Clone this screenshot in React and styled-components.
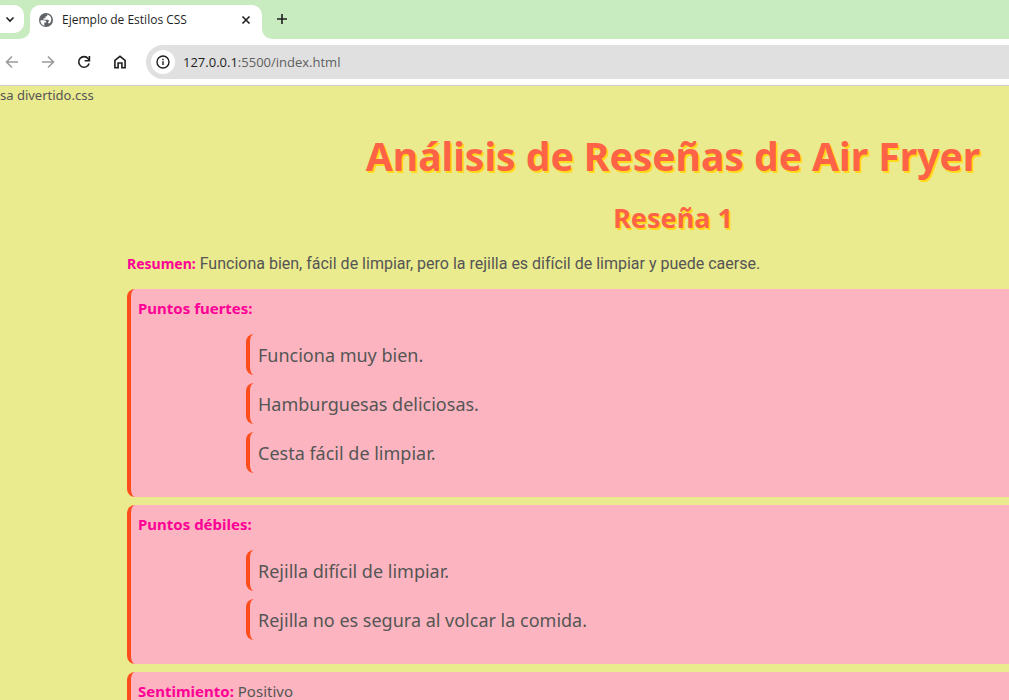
import styled, { createGlobalStyle } from "styled-components";

const tabStripColor = "#c9ebc0";
const pageColor = "#eaea8e";
const cardColor = "#fcb5c0";
const accentColor = "#ff4c1c";
const headingColor = "#ff6347";
const labelColor = "#ff0096";
const textColor = "#555555";

const GlobalStyle = createGlobalStyle`
  * {
    box-sizing: border-box;
  }

  body {
    margin: 0;
    background-color: ${pageColor};
  }

  #root {
    height: 100vh;
    overflow: hidden;
  }
`;

const StyledBrowser = styled.div`
  display: flex;
  flex-direction: column;
  font-family: "Open Sans", sans-serif;
`;

const StyledTabStrip = styled.div`
  display: flex;
  height: 39px;
  background-color: ${tabStripColor};
`;

const StyledIconButton = styled.button`
  display: flex;
  align-items: center;
  justify-content: center;
  flex: none;
  width: ${(props) => props.$size || 36}px;
  height: ${(props) => props.$size || 36}px;
  padding: 0;
  border: none;
  background: none;
  color: ${(props) => (props.disabled ? "#9b9b9b" : "#1f1f1f")};
`;

const StyledSearchCorner = styled.div`
  width: 30px;
  background-color: #ffffff;
`;

const StyledSearchArea = styled.div`
  height: 39px;
  padding: 5px 6px 6px 0;
  border-radius: 0 0 10px 0;
  background-color: ${tabStripColor};
`;

const StyledSearchButton = styled(StyledIconButton)`
  width: 24px;
  height: 28px;
  padding-right: 4px;
  border-radius: 0 10px 10px 0;
  background-color: #ffffff;
`;

const StyledTab = styled.div`
  display: flex;
  align-items: center;
  width: 232px;
  height: 34px;
  margin-top: 5px;
  padding: 0 8px;
  gap: 8px;
  border-radius: 10px 10px 0 0;
  background-color: #ffffff;
`;

const StyledTabTitle = styled.span`
  flex: 1;
  padding-bottom: 4px;
  font-size: 12px;
  line-height: 16px;
  color: #1f1f1f;
  white-space: nowrap;
`;

const StyledTabIcon = styled.span`
  display: flex;
  padding-bottom: 5px;
`;

const StyledTabEnd = styled.div`
  display: flex;
  flex: 1;
  background-color: #ffffff;
`;

const StyledTabEndFill = styled.div`
  flex: 1;
  padding: 1px 0 0 2px;
  border-radius: 0 0 0 10px;
  background-color: ${tabStripColor};
`;

const StyledToolbar = styled.div`
  display: flex;
  align-items: center;
  height: 47px;
  padding-bottom: 1px;
  border-bottom: 1px solid #cfcfcf;
  background-color: #ffffff;
`;

const StyledNavigation = styled.nav`
  display: flex;
  margin-left: -6px;
  margin-right: 8px;
`;

const StyledAddressBar = styled.div`
  display: flex;
  align-items: center;
  flex: 1;
  height: 34px;
  padding-left: 5px;
  gap: 8px;
  border-radius: 17px 0 0 17px;
  background-color: #e0e0e0;
`;

const StyledSiteInfo = styled(StyledIconButton)`
  border-radius: 50%;
  background-color: #ffffff;
`;

const StyledAddress = styled.span`
  font-size: 13px;
  line-height: 20px;
  color: #5f5f5f;
`;

const StyledHost = styled.span`
  color: #1f1f1f;
`;

const StyledPage = styled.main`
  padding-left: 127px;
  font-family: "Noto Sans", sans-serif;
  color: ${textColor};
`;

const StyledNote = styled.p`
  margin: 0 0 0 -127px;
  font-size: 13px;
  line-height: 18px;
`;

const StyledTitle = styled.h1`
  margin: 24px 0 0;
  padding-left: 210px;
  font-size: 39px;
  line-height: 56px;
  text-align: center;
  white-space: nowrap;
  color: ${headingColor};
  text-shadow: 2px 2px 0 #ffd91a;
`;

const StyledSubtitle = styled.h2`
  margin: 14px 0 0;
  padding-left: 210px;
  font-size: 27px;
  line-height: 40px;
  text-align: center;
  color: ${headingColor};
  text-shadow: 2px 2px 0 #ffd91a;
`;

const StyledLabel = styled.strong`
  font-size: 15px;
  line-height: 22px;
  color: ${labelColor};
`;

const StyledSummary = styled.p`
  margin: 15px 0 14px;
  font-family: Roboto, sans-serif;
  font-size: 16px;
  line-height: 22px;

  ${StyledLabel} {
    font-family: "Noto Sans", sans-serif;
    font-size: 14px;
  }
`;

const StyledCard = styled.section`
  margin-bottom: 8px;
  padding: 8px 0 8px 7px;
  border-left: 4px solid ${accentColor};
  border-radius: 8px 0 0 8px;
  background-color: ${cardColor};
  font-size: 15px;
  line-height: 22px;
`;

const StyledList = styled.ul`
  display: flex;
  flex-direction: column;
  gap: 8px;
  margin: 15px 0 16px;
  padding: 0 0 0 108px;
  list-style: none;
`;

const StyledItem = styled.li`
  padding: 9px 8px 7px;
  border-left: 4px solid ${accentColor};
  border-radius: 8px;
  font-size: 18px;
  line-height: 25px;
`;

const cards = [
  {
    label: "Puntos fuertes:",
    items: [
      "Funciona muy bien.",
      "Hamburguesas deliciosas.",
      "Cesta fácil de limpiar.",
    ],
  },
  {
    label: "Puntos débiles:",
    items: [
      "Rejilla difícil de limpiar.",
      "Rejilla no es segura al volcar la comida.",
    ],
  },
  { label: "Sentimiento:", text: "Positivo" },
];

const Icon = ({ size = 16, children }) => (
  <svg
    width={size}
    height={size}
    viewBox={`0 0 ${size} ${size}`}
    fill="none"
    stroke="currentColor"
    strokeWidth="1.6"
    aria-hidden="true"
  >
    {children}
  </svg>
);

const GlobeIcon = () => (
  <svg width="16" height="16" viewBox="0 0 16 16" aria-hidden="true">
    <circle cx="8" cy="8" r="7" fill="#5f6368" />
    <path
      d="M2.4 8.2h3.4c1.700 0 2.500.8 2.500 2.300h-2v3.200C3.900 13 2.300 10.800 2.400 8.200ZM9.400 2.500c0 1.500-.7 2-2 2v1.800H5.500v1.500h4c1.200 0 1.700.7 1.700 1.800h-1v1.600h1.500c2.600-2.400 2.300-7.300-2.300-8.700Z"
      fill="#ffffff"
    />
  </svg>
);

const TabStrip = () => (
  <StyledTabStrip>
    <StyledSearchCorner>
      <StyledSearchArea>
        <StyledSearchButton aria-label="Buscar pestañas">
          <Icon size={12}>
            <path d="M2.5 4.5 6 8l3.5-3.5" />
          </Icon>
        </StyledSearchButton>
      </StyledSearchArea>
    </StyledSearchCorner>
    <StyledTab>
      <StyledTabIcon>
        <GlobeIcon />
      </StyledTabIcon>
      <StyledTabTitle>Ejemplo de Estilos CSS</StyledTabTitle>
      <StyledTabIcon>
        <StyledIconButton $size={16} aria-label="Cerrar pestaña">
          <Icon>
            <path d="m4.5 4.5 7 7m0-7-7 7" />
          </Icon>
        </StyledIconButton>
      </StyledTabIcon>
    </StyledTab>
    <StyledTabEnd>
      <StyledTabEndFill>
        <StyledIconButton aria-label="Nueva pestaña">
          <Icon>
            <path d="M8 3v10M3 8h10" />
          </Icon>
        </StyledIconButton>
      </StyledTabEndFill>
    </StyledTabEnd>
  </StyledTabStrip>
);

const Toolbar = () => (
  <StyledToolbar>
    <StyledNavigation>
      <StyledIconButton disabled aria-label="Atrás">
        <Icon>
          <path d="M14 8H3m5-5.5L2.500 8 8 13.500" />
        </Icon>
      </StyledIconButton>
      <StyledIconButton disabled aria-label="Adelante">
        <Icon>
          <path d="M2 8h11M8 2.500 13.500 8 8 13.500" />
        </Icon>
      </StyledIconButton>
      <StyledIconButton aria-label="Recargar">
        <Icon>
          <path d="M13.100 9.500A5.300 5.300 0 1 1 12.200 4.700l1 1.300" />
          <path d="M13.400 2v4.700H8.600" />
        </Icon>
      </StyledIconButton>
      <StyledIconButton aria-label="Inicio">
        <Icon>
          <path d="M2.900 13.700V6.300L8 2.300l5.100 4v7.400H9.900V9H6.100v4.700Z" />
        </Icon>
      </StyledIconButton>
    </StyledNavigation>
    <StyledAddressBar>
      <StyledSiteInfo $size={24} aria-label="Información del sitio">
        <Icon>
          <circle cx="8" cy="8" r="6" strokeWidth="1.400" />
          <path d="M8 7.300v3.700M8 4.700v1.500" strokeWidth="1.400" />
        </Icon>
      </StyledSiteInfo>
      <StyledAddress>
        <StyledHost>127.0.0.1</StyledHost>:5500/index.html
      </StyledAddress>
    </StyledAddressBar>
  </StyledToolbar>
);

const Card = ({ label, text, items }) => (
  <StyledCard>
    <StyledLabel>{label}</StyledLabel> {text}
    {items && (
      <StyledList>
        {items.map((item) => (
          <StyledItem key={item}>{item}</StyledItem>
        ))}
      </StyledList>
    )}
  </StyledCard>
);

const App = () => (
  <StyledBrowser>
    <GlobalStyle />
    <TabStrip />
    <Toolbar />
    <StyledPage>
      <StyledNote>sa divertido.css</StyledNote>
      <StyledTitle>Análisis de Reseñas de Air Fryer</StyledTitle>
      <StyledSubtitle>Reseña 1</StyledSubtitle>
      <StyledSummary>
        <StyledLabel>Resumen:</StyledLabel> Funciona bien, fácil de limpiar,
        pero la rejilla es difícil de limpiar y puede caerse.
      </StyledSummary>
      {cards.map((card) => (
        <Card key={card.label} {...card} />
      ))}
    </StyledPage>
  </StyledBrowser>
);

export default App;
